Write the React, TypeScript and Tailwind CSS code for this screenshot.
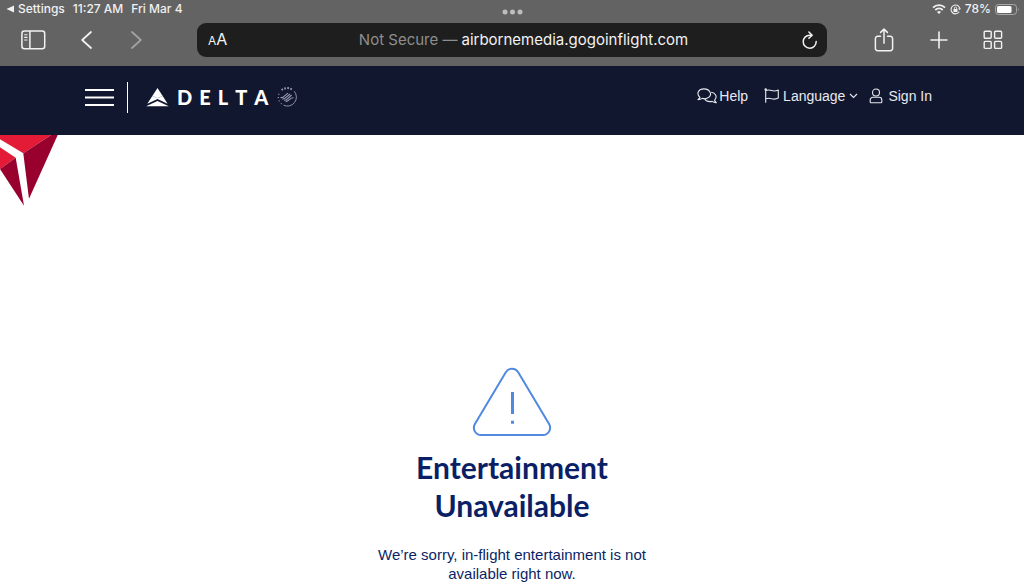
import type { ReactNode } from "react";

function BarButton({ label, children }: { label: string; children: ReactNode }) {
  return (
    <button type="button" aria-label={label} className="flex items-center justify-center">
      {children}
    </button>
  );
}

function StatusBar() {
  return (
    <div className="grid h-[23px] grid-cols-[1fr_auto_1fr] items-center text-[12px] leading-[18px] font-medium text-[#f0f0f0]">
      <div className="flex h-[18px] items-center gap-2 self-start pl-[6px]">
        <a href="#settings" className="flex items-center gap-[3px]">
          <svg width="9" height="8" viewBox="0 0 9 8" fill="currentColor" aria-hidden="true">
            <path d="M0.5 4 8 0.4v7.2z" />
          </svg>
          Settings
        </a>
        <span>11:27 AM</span>
        <span>Fri Mar 4</span>
      </div>
      <BarButton label="Multitasking">
        <svg width="21" height="6" viewBox="0 0 21 6" fill="#bdbdbd" aria-hidden="true">
          <circle cx="3" cy="3" r="2.5" />
          <circle cx="10.5" cy="3" r="2.5" />
          <circle cx="18" cy="3" r="2.5" />
        </svg>
      </BarButton>
      <div className="flex h-[18px] items-center justify-end gap-1 self-start pr-[4px]">
        <svg width="14" height="10" viewBox="0 0 14 10" fill="none" stroke="currentColor" strokeWidth="1.8" aria-label="Wi-Fi" role="img">
          <path d="M1 3.7a8.5 8.5 0 0 1 12 0M3.3 6a5.3 5.3 0 0 1 7.4 0" />
          <path d="M5 8a3 3 0 0 1 4 0L7 10z" fill="currentColor" stroke="none" />
        </svg>
        <svg width="11" height="11" viewBox="0 0 11 11" fill="none" stroke="currentColor" aria-label="Rotation lock" role="img">
          <path d="M9.2 7.8A4.4 4.4 0 1 1 9.7 4.2" strokeWidth="1.1" />
          <path d="M8 4.2h3L9.7 6.2z" fill="currentColor" stroke="none" />
          <rect x="3.5" y="5" width="4" height="3" fill="currentColor" stroke="none" />
          <path d="M4.4 5V4a1.1 1.1 0 0 1 2.2 0v1" strokeWidth="0.8" />
        </svg>
        <span>78%</span>
        <svg width="25" height="11" viewBox="0 0 25 11" aria-hidden="true">
          <rect x="0.5" y="0.5" width="21" height="10" rx="3" fill="none" stroke="#a8a8a8" />
          <rect x="2" y="2" width="14.5" height="7" rx="1.5" fill="#fff" />
          <path d="M23 3.8q1.6 1.7 0 3.4z" fill="#a8a8a8" />
        </svg>
      </div>
    </div>
  );
}

function Toolbar() {
  return (
    <div className="grid h-[34px] grid-cols-[197px_1fr_197px] items-stretch text-[#f2f2f2]">
      <div className="flex items-center pl-[21px]">
        <BarButton label="Show sidebar">
          <svg width="25" height="20" viewBox="0 0 25 20" fill="none" stroke="currentColor" strokeWidth="1.5" aria-hidden="true">
            <rect x="0.9" y="1" width="22.8" height="17.8" rx="2.5" />
            <path d="M8.9 1v17.8" />
            <path d="M3.2 4.8h3.3M3.2 7.4h3.3M3.2 10h3.3" strokeWidth="1.1" />
          </svg>
        </BarButton>
        <div className="ml-[35px] flex gap-[39px]">
          <BarButton label="Back">
            <svg width="11" height="18" viewBox="0 0 11 18" fill="none" stroke="currentColor" strokeWidth="1.7" strokeLinecap="round" strokeLinejoin="round" aria-hidden="true">
              <path d="M10 1 1.2 9l8.8 8" />
            </svg>
          </BarButton>
          <BarButton label="Forward">
            <svg width="11" height="18" viewBox="0 0 11 18" fill="none" stroke="#a3a3a3" strokeWidth="1.7" strokeLinecap="round" strokeLinejoin="round" aria-hidden="true">
              <path d="m1 1 8.8 8L1 17" />
            </svg>
          </BarButton>
        </div>
      </div>
      <div className="flex items-center justify-between rounded-[9px] bg-[#1e1e1e] pr-[9px] pl-[11px] text-[15px] leading-5">
        <button type="button" aria-label="Page settings" className="flex items-baseline">
          <span className="text-[12px]">A</span>
          <span className="text-[16px]">A</span>
        </button>
        <div className="flex items-center gap-1 pl-6">
          <label htmlFor="address" className="text-[#8e8e8e]">
            Not Secure —
          </label>
          <input
            id="address"
            type="text"
            defaultValue="airbornemedia.gogoinflight.com"
            className="w-[232px] bg-transparent p-0 outline-none"
          />
        </div>
        <BarButton label="Reload">
          <svg width="17" height="19" viewBox="0 0 17 19" fill="none" stroke="currentColor" strokeWidth="1.5" strokeLinecap="round" strokeLinejoin="round" aria-hidden="true">
            <path d="M10.6 4.2H8.700A6.500 6.500 0 1 0 15.200 10.600" />
            <path d="M7.900 1 11.100 4.200 7.900 7.300" />
          </svg>
        </BarButton>
      </div>
      <div className="flex items-center justify-between pr-[21px] pl-[47px]">
        <BarButton label="Share">
          <svg width="20" height="24" viewBox="0 0 20 24" fill="none" stroke="currentColor" strokeWidth="1.5" strokeLinecap="round" strokeLinejoin="round" aria-hidden="true">
            <path d="M6.5 8.3H3.6A2.2 2.2 0 0 0 1.4 10.5v10a2.2 2.2 0 0 0 2.2 2.2h12.8a2.2 2.2 0 0 0 2.2-2.2v-10a2.2 2.2 0 0 0-2.2-2.2h-2.9" />
            <path d="M10 15.2V1.2M6.6 4.4 10 1.1l3.4 3.3" />
          </svg>
        </BarButton>
        <BarButton label="New tab">
          <svg width="18" height="18" viewBox="0 0 18 18" fill="none" stroke="currentColor" strokeWidth="1.6" strokeLinecap="round" aria-hidden="true">
            <path d="M9 1v16M1 9h16" />
          </svg>
        </BarButton>
        <BarButton label="Tab overview">
          <svg width="20" height="20" viewBox="0 0 20 20" fill="none" stroke="currentColor" strokeWidth="1.4" aria-hidden="true">
            <rect x="1.2" y="1.2" width="7" height="7" rx="1" />
            <rect x="11.6" y="1.2" width="7" height="7" rx="1" />
            <rect x="1.2" y="11.4" width="7" height="7" rx="1" />
            <rect x="11.6" y="11.4" width="7" height="7" rx="1" />
          </svg>
        </BarButton>
      </div>
    </div>
  );
}

function SkyTeamEmblem() {
  return (
    <svg width="20" height="20" viewBox="0 0 20 20" fill="none" stroke="#9a9eb2" aria-hidden="true">
      <path d="M17.2 4.2A9 9 0 0 1 6.5 18.2" strokeWidth="0.9" />
      <path d="M4.6 17A9 9 0 0 1 3.2 4.6" strokeWidth="1.2" strokeDasharray="1 2.4" />
      <path d="M4.6 3A9 9 0 0 1 15.4 2.7" strokeWidth="2" strokeDasharray="1.6 1.4" />
      <path d="M3.5 10.5c2 .6 3-.4 4.2-1.6l3.2-2.8M5.2 12c2 .4 3-.6 4.2-1.8L13 7M7 13.3c1.8.2 2.8-.8 4-2l3.6-3.3M8.7 14.6c2 0 2.8-1 4-2.2 1-1 2-1.7 3.8-1.6" strokeWidth="1.1" />
    </svg>
  );
}

function SiteHeader() {
  return (
    <header className="flex h-[69px] items-center justify-between bg-[#11172f] pr-[92px] pb-[7px] pl-[85px] font-['Liberation_Sans',sans-serif] text-[14px] leading-5 text-[#e8e9ee]">
      <div className="flex items-center">
        <BarButton label="Menu">
          <svg width="29" height="18" viewBox="0 0 29 18" stroke="#fff" strokeWidth="2" aria-hidden="true">
            <path d="M0 2h29M0 9.5h29M0 17h29" />
          </svg>
        </BarButton>
        <a href="#home" aria-label="Delta" className="ml-[13px] flex h-[31px] items-center border-l border-white pl-[18px] text-white">
          <svg width="24" height="19" viewBox="0 0 24 19" fill="#fff" aria-hidden="true">
            <path d="M11.5 0 6.3 8.100 11.5 10.300 16.700 8.100z" />
            <path d="M6.300 8.100 1.300 15.800 11.500 10.900 21.600 15.800 16.700 8.100 11.500 10.300z" />
            <path d="M0 18.300 11.500 13 22.800 18.300z" />
          </svg>
          <span className="ml-[7px] flex gap-[7px] font-['Lato',sans-serif] text-[20px] leading-6 font-black">
            <span>D</span>
            <span>E</span>
            <span>L</span>
            <span>T</span>
            <span>A</span>
          </span>
          <span className="ml-[9px]">
            <SkyTeamEmblem />
          </span>
        </a>
      </div>
      <nav className="flex items-center pb-[2px]">
        <a href="#help" className="flex items-center gap-[2px]">
          <svg width="20" height="17" viewBox="0 0 20 17" fill="none" stroke="currentColor" strokeWidth="1.1" strokeLinejoin="round" aria-hidden="true">
            <path d="M3 9.300C-1.200 5.500 1.500.9 7 .9s8.500 5.300 5 8.200c-1.700 1.500-4.300 1.900-6.700 1.300-1.300.8-2.600 1.200-4.300 1.200C2 10.800 2.600 10.100 3 9.300z" />
            <path d="M14.200 4.200c4.500.6 6.500 4.700 3.400 7.900.2 1 .8 1.700 1.700 2.500-1.700.1-3-.4-4.100-1.200-3.500.7-6.200-.3-7.600-2.700" />
          </svg>
          Help
        </a>
        <button type="button" className="ml-4 flex items-center">
          <svg width="16" height="16" viewBox="0 0 16 16" fill="none" stroke="currentColor" strokeWidth="1.1" strokeLinejoin="round" aria-hidden="true">
            <path d="M1.700 1.800v13" />
            <circle cx="1.700" cy="1.500" r="0.700" />
            <path d="M1.700 2.600c2.500-1 4.200-.6 6 0 2.200.8 4 .6 6.600-.5v8c-2.400 1.200-4.400 1.300-6.600.6-2-.7-3.600-.7-6 .1" />
          </svg>
          <span className="ml-[3px]">Language</span>
          <svg className="ml-[4px]" width="9" height="6" viewBox="0 0 9 6" fill="none" stroke="currentColor" strokeWidth="1.1" aria-hidden="true">
            <path d="m1 1 3.5 3.5L8 1" />
          </svg>
        </button>
        <a href="#sign-in" className="ml-[11px] flex items-center gap-[5px]">
          <svg width="14" height="16" viewBox="0 0 14 16" fill="none" stroke="currentColor" strokeWidth="1.1" aria-hidden="true">
            <circle cx="7" cy="4.5" r="3.5" />
            <path d="M3.800 9.300h6.400a2.600 2.600 0 0 1 2.600 2.600V14a.8.8 0 0 1-.8.8H2a.8.8 0 0 1-.8-.8v-2.100a2.600 2.600 0 0 1 2.600-2.600z" />
          </svg>
          Sign In
        </a>
      </nav>
    </header>
  );
}

export default function App() {
  return (
    <div className="min-h-screen bg-white font-['Inter',sans-serif]">
      <div className="bg-[#636363] pb-[9px]">
        <StatusBar />
        <Toolbar />
      </div>
      <SiteHeader />
      <main className="relative flex flex-col items-center px-6 pt-[232px] text-center text-[#0b1f66]">
        <svg className="absolute top-0 left-0" width="58" height="72" viewBox="0 0 58 72" aria-hidden="true">
          <path d="M0 0H51L23.300 18.300 0 4.300z" fill="#e31b37" />
          <path d="M51 0h6.700L29 63.700 23.300 18.300z" fill="#98002e" />
          <path d="M0 12.300 15.700 22.700 0 34z" fill="#e31b37" />
          <path d="M15.700 22.700 24 70.700 0 34z" fill="#98002e" />
        </svg>
        <svg width="80" height="70" viewBox="0 0 80 70" fill="none" stroke="#5089e0" strokeWidth="2" aria-hidden="true">
          <path d="M33.800 5.200 2.900 57.100C.2 62 3.300 68 9 68h62c5.700 0 8.800-6 6.100-10.900L46.200 5.200c-2.900-4.600-9.500-4.600-12.400 0z" />
          <path d="M40.500 25v22M40.500 53.800v3" strokeWidth="3" />
        </svg>
        <h1 className="mt-[11px] max-w-[240px] font-['Lato',sans-serif] text-[30px] leading-[38px] font-bold">
          Entertainment Unavailable
        </h1>
        <p className="mt-[21px] max-w-[300px] font-['Liberation_Sans',sans-serif] text-[15px] leading-[19px]">
          We’re sorry, in-flight entertainment is not available right now.
        </p>
      </main>
    </div>
  );
}
